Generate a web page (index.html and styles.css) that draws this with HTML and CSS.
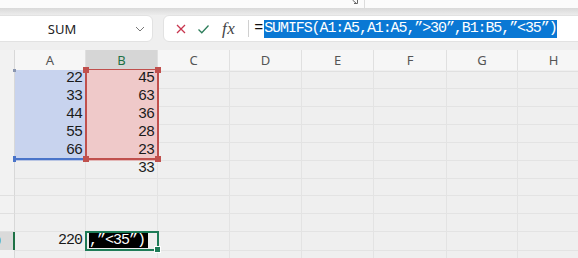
FILE: index.html
```html
<!DOCTYPE html>
<html lang="en">

<head>
    <meta charset="UTF-8">
    <title>SUMIFS</title>
    <link rel="stylesheet" href="styles.css">
</head>

<body>
    <div class="ribbon-end">
        <svg class="launcher" width="6" height="4" viewBox="0 0 6 4">
            <path d="M0.5 0 L4.5 3.5 M5.5 0 V3.5 H2" fill="none" stroke="#666" stroke-width="1"/>
        </svg>
        <span class="ribbon-sep"></span>
    </div>
    <div class="ribbon-shadow"></div>

    <div class="formula-bar">
        <div class="name-box">
            <span class="name">SUM</span>
            <svg class="chevron" width="10" height="6" viewBox="0 0 10 6">
                <path d="M1 1 L5 5 L9 1" fill="none" stroke="#777" stroke-width="1"/>
            </svg>
        </div>
        <div class="formula-box">
            <svg class="icon" width="12" height="12" viewBox="0 0 12 12">
                <path d="M2 2 L10 10 M10 2 L2 10" stroke="#c8364f" stroke-width="1.3"/>
            </svg>
            <svg class="icon" width="13" height="12" viewBox="0 0 13 12">
                <path d="M1.5 6.5 L4.8 9.8 L11.5 2.5" fill="none" stroke="#2d7d5a" stroke-width="1.3"/>
            </svg>
            <span class="fx">fx</span>
            <span class="divider"></span>
            <span class="formula">=<span class="sel">SUMIFS(A1:A5,A1:A5,&#8221;&gt;30&#8221;,B1:B5,&#8221;&lt;35&#8221;)</span></span>
        </div>
    </div>

    <div class="sheet">
        <div class="row head">
            <div class="rh"></div>
            <div class="ch">A</div>
            <div class="ch active">B</div>
            <div class="ch">C</div>
            <div class="ch">D</div>
            <div class="ch">E</div>
            <div class="ch">F</div>
            <div class="ch">G</div>
            <div class="ch">H</div>
        </div>
        <div class="row">
            <div class="rh"></div>
            <div class="c ref-a">22</div><div class="c ref-b">45</div>
            <div class="c"></div><div class="c"></div><div class="c"></div><div class="c"></div><div class="c"></div><div class="c"></div>
        </div>
        <div class="row">
            <div class="rh"></div>
            <div class="c ref-a">33</div><div class="c ref-b">63</div>
            <div class="c"></div><div class="c"></div><div class="c"></div><div class="c"></div><div class="c"></div><div class="c"></div>
        </div>
        <div class="row">
            <div class="rh"></div>
            <div class="c ref-a">44</div><div class="c ref-b">36</div>
            <div class="c"></div><div class="c"></div><div class="c"></div><div class="c"></div><div class="c"></div><div class="c"></div>
        </div>
        <div class="row">
            <div class="rh"></div>
            <div class="c ref-a">55</div><div class="c ref-b">28</div>
            <div class="c"></div><div class="c"></div><div class="c"></div><div class="c"></div><div class="c"></div><div class="c"></div>
        </div>
        <div class="row">
            <div class="rh"></div>
            <div class="c ref-a">66</div><div class="c ref-b">23</div>
            <div class="c"></div><div class="c"></div><div class="c"></div><div class="c"></div><div class="c"></div><div class="c"></div>
        </div>
        <div class="row">
            <div class="rh"></div>
            <div class="c"></div><div class="c">33</div>
            <div class="c"></div><div class="c"></div><div class="c"></div><div class="c"></div><div class="c"></div><div class="c"></div>
        </div>
        <div class="row">
            <div class="rh"></div>
            <div class="c"></div><div class="c"></div>
            <div class="c"></div><div class="c"></div><div class="c"></div><div class="c"></div><div class="c"></div><div class="c"></div>
        </div>
        <div class="row">
            <div class="rh"></div>
            <div class="c"></div><div class="c"></div>
            <div class="c"></div><div class="c"></div><div class="c"></div><div class="c"></div><div class="c"></div><div class="c"></div>
        </div>
        <div class="row">
            <div class="rh"></div>
            <div class="c"></div><div class="c"></div>
            <div class="c"></div><div class="c"></div><div class="c"></div><div class="c"></div><div class="c"></div><div class="c"></div>
        </div>
        <div class="row">
            <div class="rh active"><span>10</span></div>
            <div class="c">220</div><div class="c editing"><span class="edit-sel">,&#8221;&lt;35&#8221;)</span></div>
            <div class="c"></div><div class="c"></div><div class="c"></div><div class="c"></div><div class="c"></div><div class="c"></div>
        </div>
        <div class="row">
            <div class="rh"></div>
            <div class="c"></div><div class="c"></div>
            <div class="c"></div><div class="c"></div><div class="c"></div><div class="c"></div><div class="c"></div><div class="c"></div>
        </div>

        <!-- range highlights drawn over the cells -->
        <div class="range-a"><i class="dot tl"></i><i class="dot bl"></i></div>
        <div class="range-b"><i class="knob tl"></i><i class="knob tr"></i><i class="knob bl"></i><i class="knob br"></i></div>
        <div class="active-cell"><i class="fill-handle"></i></div>
    </div>
</body>

</html>
```

FILE: styles.css
```css
body {
    margin: 0;
    width: 578px;
    height: 258px;
    overflow: hidden;
    background: #efefef;
    font-family: "Noto Sans", sans-serif;
}

/* ribbon edge at the very top */
.ribbon-end {
    height: 8px;
    background: #fbfbfb;
    display: flex;
    align-items: flex-start;
    padding-left: 352px;
    gap: 6px;
}

.ribbon-sep {
    width: 1px;
    height: 8px;
    background: #dcdcdc;
}

.ribbon-shadow {
    height: 7px;
    background: linear-gradient(#d9d9d9, #ececec);
}

/* formula bar */
.formula-bar {
    display: flex;
    gap: 10px;
    height: 27px;
}

.name-box {
    width: 161px;
    margin-left: -8px;
    background: #fff;
    border: 1px solid #e2e2e2;
    border-radius: 6px;
    box-sizing: border-box;
    display: flex;
    align-items: center;
}

.name {
    flex: 1;
    text-align: center;
    font-size: 13px;
    color: #222;
}

.chevron {
    margin: 0 7px 0 4px;
}

.formula-box {
    flex: 1;
    margin-right: -20px;
    background: #fff;
    border: 1px solid #e2e2e2;
    border-radius: 6px;
    box-sizing: border-box;
    display: flex;
    align-items: center;
    padding-left: 11px;
}

.icon {
    margin-right: 10px;
}

.fx {
    font-family: "Liberation Serif", serif;
    font-style: italic;
    font-size: 17px;
    color: #444;
    margin-left: 2px;
    letter-spacing: 0.5px;
}

.divider {
    width: 1px;
    height: 17px;
    background: #d0d0d0;
    margin: 0 5px 0 13px;
}

.formula {
    font-family: "Liberation Mono", monospace;
    font-size: 15px;
    letter-spacing: -1.1px;
    color: #111;
    white-space: nowrap;
}

.formula .sel {
    background: #0a78d4;
    color: #fff;
    line-height: 18px;
    display: inline-block;
    margin-left: 2px;
}

/* sheet grid */
.sheet {
    position: relative;
    margin-top: 8px;
    overflow: hidden;
    height: 208px;
}

.row {
    display: grid;
    grid-template-columns: 15px 71px 72px 72px 72px 72px 73px 71px 72px;
    height: 18px;
}

.row.head {
    height: 20px;
    background: #f6f6f6;
}

.ch {
    font-size: 13px;
    color: #555;
    text-align: center;
    line-height: 20px;
    border-right: 1px solid #e0e0e0;
    border-bottom: 1px solid #e0e0e0;
    box-sizing: border-box;
}

.ch.active {
    background: #d6d6d6;
    color: #1e7145;
    border-bottom: 2px solid #1e7145;
}

.rh {
    background: #f2f2f2;
    border-right: 1px solid #d8d8d8;
    border-bottom: 1px solid #e0e0e0;
    box-sizing: border-box;
    overflow: hidden;
    font-size: 12px;
    line-height: 17px;
}

.rh span {
    display: block;
    width: 38px;
    margin-left: -25px;
    text-align: center;
    color: #555;
}

.rh.active {
    background: #dadada;
    border-right: 2px solid #1e7145;
}

.rh.active span {
    color: #1e7145;
}

.c {
    border-right: 1px solid #e3e3e3;
    border-bottom: 1px solid #e3e3e3;
    box-sizing: border-box;
    font-family: "Liberation Mono", monospace;
    font-size: 15px;
    letter-spacing: -1px;
    line-height: 18px;
    text-align: right;
    padding-right: 3px;
    color: #1a1a1a;
    white-space: nowrap;
}

.c.ref-a {
    background: #c8d3ee;
    border-color: #b9c5e3;
}

.c.ref-b {
    background: #efc9c9;
    border-color: #e3b7b7;
}

.c.editing {
    text-align: left;
    padding-left: 3px;
}

.edit-sel {
    background: #000;
    color: #fff;
    display: inline-block;
    line-height: 15px;
    padding-right: 3px;
}

/* reference outlines */
.range-a {
    position: absolute;
    left: 15px;
    top: 20px;
    width: 71px;
    height: 90px;
    border-bottom: 2px solid #4a74c9;
    box-sizing: border-box;
}

.range-b {
    position: absolute;
    left: 85px;
    top: 19px;
    width: 74px;
    height: 91px;
    border: 2px solid #c0504d;
    border-top-width: 1px;
    box-sizing: border-box;
}

.dot, .knob {
    position: absolute;
    width: 4px;
    height: 4px;
}

.dot {
    background: #4a74c9;
}

.dot.tl { left: -2px; top: -1px; background: #8a96b0; width: 3px; height: 3px; }
.dot.bl { left: -2px; bottom: -4px; height: 6px; width: 3px; }

.knob {
    background: #c0504d;
    width: 6px;
    height: 6px;
}

.knob.tl { left: -4px; top: -3px; }
.knob.tr { right: -4px; top: -3px; }
.knob.bl { left: -4px; bottom: -4px; }
.knob.br { right: -4px; bottom: -4px; }

.active-cell {
    position: absolute;
    left: 85px;
    top: 181px;
    width: 74px;
    height: 20px;
    border: 2px solid #1e7b57;
    box-sizing: border-box;
}

.fill-handle {
    position: absolute;
    right: -4px;
    bottom: -4px;
    width: 5px;
    height: 5px;
    background: #1e7b57;
    border: 1px solid #fff;
}
```
